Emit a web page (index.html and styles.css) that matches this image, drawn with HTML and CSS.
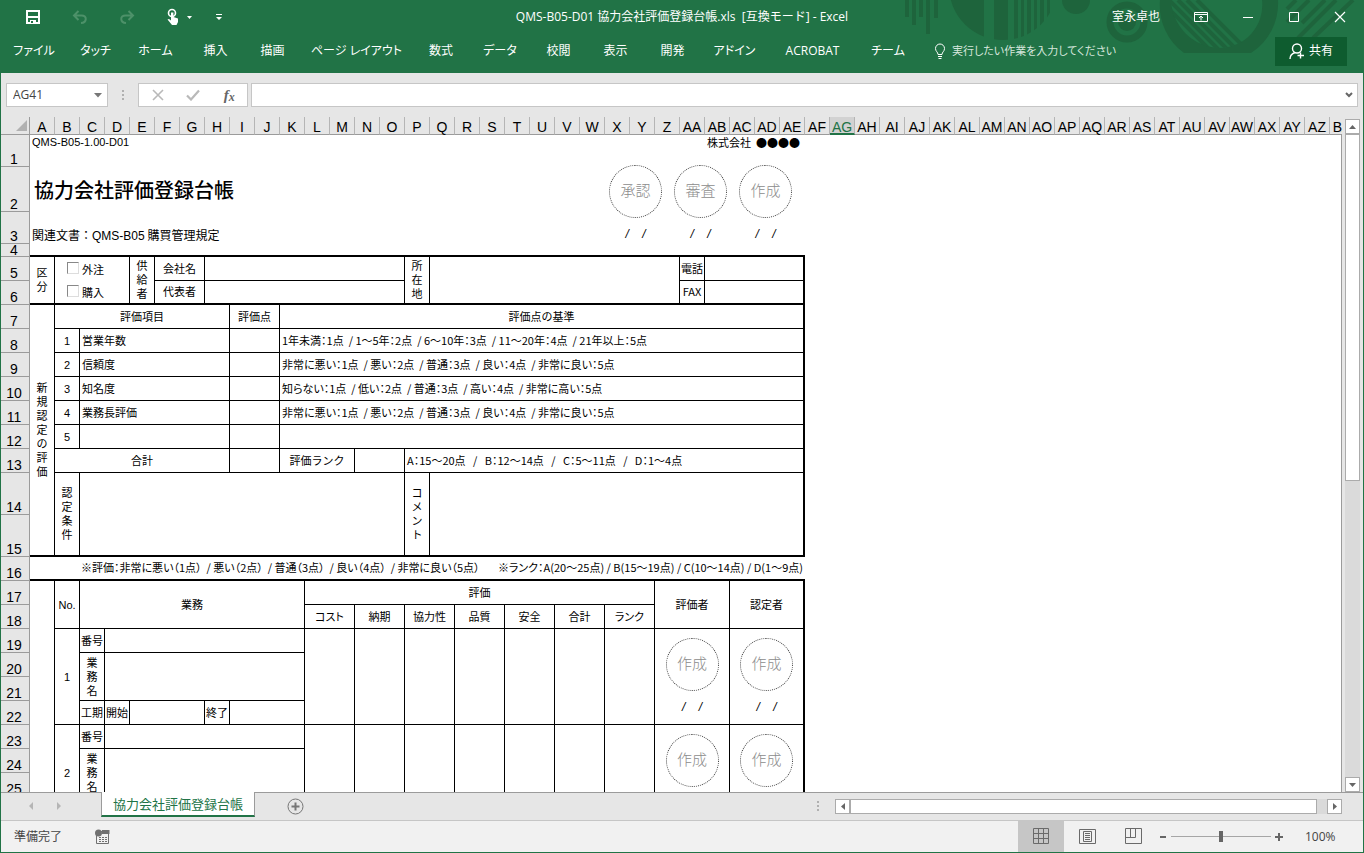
FILE: index.html
```html
<!DOCTYPE html>
<html lang="ja">
<head>
<meta charset="utf-8">
<title>QMS-B05-D01 協力会社評価登録台帳.xls [互換モード] - Excel</title>
<link rel="stylesheet" href="styles.css">
</head>
<body>
<div class="window">
  <header class="top">
    <svg class="deco" width="464" height="54" viewBox="900 0 464 54" aria-hidden="true">
      <defs>
        <clipPath id="disc"><circle cx="1003" cy="-14" r="54"/></clipPath>
        <clipPath id="inner"><circle cx="1219" cy="0" r="48"/></clipPath>
      </defs>
      <g fill="#1e643c">
        <path d="M905 0h4v17h-4zM912 0h4v25h-4zM919 0h4v17h-4zM926 0h4v34h-4zM934 0h4v18h-4z"/>
        <g clip-path="url(#disc)"><path d="M950 0h34v50h-34zM994 0h14v50h-14zM1014 0h4v50h-4zM1021 0h3v50h-3zM1027 0h4v50h-4zM1034 0h3v50h-3zM1040 0h4v50h-4zM1047 0h3v50h-3z"/></g>
        <circle cx="1076" cy="0" r="14"/>
        <circle cx="1127" cy="22" r="9"/>
        <path fill-rule="evenodd" d="M1160 0A59 59 0 0 0 1184 53H1251A59 59 0 0 0 1278 0H1262A43 43 0 0 1 1219 48A50 50 0 0 1 1171 0Z"/>
      </g>
      <circle cx="1127" cy="22" r="17" fill="none" stroke="#1e643c" stroke-width="7"/>
      <g clip-path="url(#inner)" stroke="#1e643c" stroke-width="4">
        <path d="M1160 0l50 50M1169 0l50 50M1178 0l50 50M1187 0l50 50M1197 0l50 50"/>
      </g>
      <path d="M1287 9l9-9M1287 22l22-22M1302 23l23-23M1298 38l38-38M1313 38l40-38" stroke="#1e643c" stroke-width="4"/>
    </svg>
    <div class="titlebar">
      <div class="quick">
        <button aria-label="上書き保存"><svg width="16" height="16" viewBox="0 0 16 16"><path d="M1 1h14v14H1z" fill="#fff"/><path d="M3 3h10v4H3zM3 9h10v4H3z" fill="#217346"/><path d="M5 11h6v3H5z" fill="#fff"/><path d="M6 12h2v2H6z" fill="#217346"/></svg></button>
        <button aria-label="元に戻す"><svg width="16" height="16" viewBox="0 0 16 16" fill="none" stroke="#4d9169" stroke-width="2"><path d="M6.500 2L2 6.500 6.500 11M2 6.500h7.500c6 0 5.500 7-.5 7.500"/></svg></button>
        <button aria-label="やり直し"><svg width="16" height="16" viewBox="0 0 16 16" fill="none" stroke="#4d9169" stroke-width="2"><path d="M9.500 2L14 6.500 9.500 11M14 6.500H6.500c-6 0-5.500 7 .5 7.500"/></svg></button>
        <button class="touch" aria-label="タッチ/マウス モード"><svg width="28" height="18" viewBox="0 0 28 18"><circle cx="6" cy="5" r="3.500" fill="none" stroke="#fff" stroke-width="1.600"/><path d="M5 4.500h2.400V9l4.600 1.500V14l-1.500 3H6L1.500 11.500 3 11l2 1.500z" fill="#fff"/><path d="M21 8h5l-2.500 3z" fill="#fff"/></svg></button>
        <button aria-label="クイック アクセスのカスタマイズ"><svg width="8" height="8" viewBox="0 0 8 8" fill="#fff"><path d="M1 1h6v1H1zM1 4h6L4 7z"/></svg></button>
      </div>
      <h1 class="doc">QMS-B05-D01 協力会社評価登録台帳.xls&nbsp; [互換モード] - Excel</h1>
      <div class="account">
        <span class="user">室永卓也</span>
        <button aria-label="リボンの表示オプション"><svg width="14" height="12" viewBox="0 0 14 12" fill="none" stroke="#fff"><path d="M.5 1.500h13v9H.5zM.5 3.500h13M7 9.500v-4M5 7l2-2 2 2"/></svg></button>
        <button aria-label="最小化"><svg width="12" height="12" viewBox="0 0 12 12"><path d="M1 6.500h10" stroke="#fff"/></svg></button>
        <button aria-label="最大化"><svg width="12" height="12" viewBox="0 0 12 12"><path d="M1.500 1.500h9v9h-9z" stroke="#fff" fill="none"/></svg></button>
        <button aria-label="閉じる"><svg width="12" height="12" viewBox="0 0 12 12"><path d="M1 1l10 10M11 1L1 11" stroke="#fff" stroke-width="1.200"/></svg></button>
      </div>
    </div>
    <div class="ribbon">
      <nav class="tabs">
        <button>ファイル</button><button>タッチ</button><button>ホーム</button><button>挿入</button><button>描画</button><button>ページ レイアウト</button><button>数式</button><button>データ</button><button>校閲</button><button>表示</button><button>開発</button><button>アドイン</button><button>ACROBAT</button><button>チーム</button>
      </nav>
      <button class="tell"><svg width="12" height="16" viewBox="0 0 12 16" fill="none" stroke="#fff"><path d="M4 11.500C4 9 1.500 8.500 1.500 5.500a4.500 4.500 0 0 1 9 0C10.500 8.500 8 9 8 11.500zM4 13.500h4M4.500 15.500h3"/></svg>実行したい作業を入力してください</button>
      <button class="share"><svg width="16" height="17" viewBox="0 0 16 17" fill="none" stroke="#fff" stroke-width="1.400"><circle cx="8" cy="5.500" r="4.500"/><path d="M1 16c0-3.500 2-5.500 5-6.500M8.500 12.500H15M11.500 9.500v6"/></svg>共有</button>
    </div>
  </header>

  <div class="formula">
    <div class="namebox"><input aria-label="名前ボックス" value="AG41"><button aria-label="名前の一覧"><svg width="8" height="5" viewBox="0 0 8 5"><path d="M0 0h8L4 4.500z" fill="#777"/></svg></button></div>
    <svg class="grip" width="3" height="11" viewBox="0 0 3 11" fill="#b0b0b0"><path d="M0 0h2v2H0zM0 4h2v2H0zM0 8h2v2H0z"/></svg>
    <div class="fx">
      <button aria-label="キャンセル"><svg width="12" height="12" viewBox="0 0 12 12"><path d="M1 1l10 10M11 1L1 11" stroke="#b9b9b9" stroke-width="1.600"/></svg></button>
      <button aria-label="入力"><svg width="14" height="12" viewBox="0 0 14 12"><path d="M1 6.500L5 10.500 13 1.500" stroke="#b9b9b9" stroke-width="2.200" fill="none"/></svg></button>
      <button aria-label="関数の挿入"><i>f</i><i class="sub">x</i></button>
    </div>
    <div class="entry"><input aria-label="数式バー"><button aria-label="数式バーの展開"><svg width="8" height="6" viewBox="0 0 8 6"><path d="M1 1l3 3 3-3" stroke="#666" stroke-width="2" fill="none"/></svg></button></div>
  </div>

  <main class="work">
    <div class="sheet">
      <table class="grid">
        <colgroup><col class="rowcol"><col span="53" class="unit"></colgroup>
        <thead>
          <tr><th class="corner"><svg width="11" height="11" viewBox="0 0 11 11"><path d="M11 0v11H0z" fill="#b1b1b1"/></svg></th><th>A</th><th>B</th><th>C</th><th>D</th><th>E</th><th>F</th><th>G</th><th>H</th><th>I</th><th>J</th><th>K</th><th>L</th><th>M</th><th>N</th><th>O</th><th>P</th><th>Q</th><th>R</th><th>S</th><th>T</th><th>U</th><th>V</th><th>W</th><th>X</th><th>Y</th><th>Z</th><th>AA</th><th>AB</th><th>AC</th><th>AD</th><th>AE</th><th>AF</th><th class="active">AG</th><th>AH</th><th>AI</th><th>AJ</th><th>AK</th><th>AL</th><th>AM</th><th>AN</th><th>AO</th><th>AP</th><th>AQ</th><th>AR</th><th>AS</th><th>AT</th><th>AU</th><th>AV</th><th>AW</th><th>AX</th><th>AY</th><th>AZ</th><th>BA</th></tr>
        </thead>
        <tbody>
          <tr class="h32"><th>1</th><td class="n top l latin" colspan="22">QMS-B05-1.00-D01</td><td class="n top r" colspan="9">株式会社&nbsp;&nbsp;●●●●</td><td class="n" colspan="22"></td></tr>
          <tr class="h45"><th>2</th><td class="n l heading" colspan="22">協力会社評価登録台帳</td><td class="n approvals" colspan="9"><div class="seals"><span class="seal">承認</span><span class="seal">審査</span><span class="seal">作成</span></div></td><td class="n" colspan="22"></td></tr>
          <tr class="h32"><th>3</th><td class="n l related" colspan="22">関連文書：<span>QMS-B05</span> 購買管理規定</td><td class="n" colspan="9"><div class="dates"><span>/&nbsp;&nbsp;&nbsp;&nbsp;/</span><span>/&nbsp;&nbsp;&nbsp;&nbsp;/</span><span>/&nbsp;&nbsp;&nbsp;&nbsp;/</span></div></td><td class="n" colspan="22"></td></tr>
          <tr class="h13"><th>4</th><td class="n b2" colspan="31"></td><td class="n" colspan="22"></td></tr>

          <tr><th>5</th><td class="b2" rowspan="2"><span class="v">区分</span></td><td class="b2 kinds" colspan="3" rowspan="2"><label><input type="checkbox">外注</label><label><input type="checkbox">購入</label></td><td class="b2" rowspan="2"><span class="v">供給者</span></td><td colspan="2">会社名</td><td colspan="8"></td><td class="b2" rowspan="2"><span class="v">所在地</span></td><td class="b2" colspan="10" rowspan="2"></td><td>電話</td><td class="r2" colspan="4"></td><td class="n" colspan="22"></td></tr>
          <tr><th>6</th><td class="b2" colspan="2">代表者</td><td class="b2" colspan="8"></td><td class="b2">FAX</td><td class="b2 r2" colspan="4"></td><td class="n" colspan="22"></td></tr>

          <tr><th>7</th><td class="b2" rowspan="9"><span class="v">新規認定の評価</span></td><td colspan="7">評価項目</td><td colspan="2">評価点</td><td class="r2" colspan="21">評価点の基準</td><td class="n" colspan="22"></td></tr>
          <tr><th>8</th><td class="latin">1</td><td class="l" colspan="6">営業年数</td><td colspan="2"></td><td class="l r2 criteria" colspan="21">1年未満：1点&nbsp; / 1～5年：2点&nbsp; / 6～10年：3点&nbsp; / 11～20年：4点&nbsp; / 21年以上：5点</td><td class="n" colspan="22"></td></tr>
          <tr><th>9</th><td class="latin">2</td><td class="l" colspan="6">信頼度</td><td colspan="2"></td><td class="l r2 criteria" colspan="21">非常に悪い：1点&nbsp; / 悪い：2点&nbsp; / 普通：3点&nbsp; / 良い：4点&nbsp; / 非常に良い：5点</td><td class="n" colspan="22"></td></tr>
          <tr><th>10</th><td class="latin">3</td><td class="l" colspan="6">知名度</td><td colspan="2"></td><td class="l r2 criteria" colspan="21">知らない：1点&nbsp; / 低い：2点&nbsp; / 普通：3点&nbsp; / 高い：4点&nbsp; / 非常に高い：5点</td><td class="n" colspan="22"></td></tr>
          <tr><th>11</th><td class="latin">4</td><td class="l" colspan="6">業務長評価</td><td colspan="2"></td><td class="l r2 criteria" colspan="21">非常に悪い：1点&nbsp; / 悪い：2点&nbsp; / 普通：3点&nbsp; / 良い：4点&nbsp; / 非常に良い：5点</td><td class="n" colspan="22"></td></tr>
          <tr><th>12</th><td class="latin">5</td><td colspan="6"></td><td colspan="2"></td><td class="r2" colspan="21"></td><td class="n" colspan="22"></td></tr>
          <tr><th>13</th><td colspan="7">合計</td><td colspan="2"></td><td colspan="3">評価ランク</td><td colspan="2"></td><td class="l r2 criteria" colspan="16">A：15～20点&nbsp;&nbsp; /&nbsp;&nbsp; B：12～14点&nbsp;&nbsp; /&nbsp;&nbsp; C：5～11点&nbsp;&nbsp; /&nbsp;&nbsp; D：1～4点</td><td class="n" colspan="22"></td></tr>
          <tr class="h42"><th>14</th><td class="b2" rowspan="2"><span class="v">認定条件</span></td><td class="b2" colspan="13" rowspan="2"></td><td class="b2" rowspan="2"><span class="v">コメント</span></td><td class="b2 r2" colspan="15" rowspan="2"></td><td class="n" colspan="22"></td></tr>
          <tr class="h42"><th>15</th><td class="n" colspan="22"></td></tr>
          <tr><th>16</th><td class="n b2" colspan="2"></td><td class="n b2 notes" colspan="29"><div><span class="criteria">※評価：非常に悪い（1点）&nbsp; / 悪い（2点）&nbsp; / 普通（3点）&nbsp; / 良い（4点）&nbsp; / 非常に良い（5点）</span><span class="criteria">※ランク：A(20～25点) / B(15～19点) / C(10～14点) / D(1～9点)</span></div></td><td class="n" colspan="22"></td></tr>

          <tr><th>17</th><td rowspan="10"></td><td class="latin" rowspan="2">No.</td><td colspan="9" rowspan="2">業務</td><td colspan="14">評価</td><td colspan="3" rowspan="2">評価者</td><td class="r2" colspan="3" rowspan="2">認定者</td><td class="n" colspan="22"></td></tr>
          <tr><th>18</th><td class="criteria" colspan="2">コスト</td><td colspan="2">納期</td><td colspan="2">協力性</td><td colspan="2">品質</td><td colspan="2">安全</td><td colspan="2">合計</td><td class="criteria" colspan="2">ランク</td><td class="n" colspan="22"></td></tr>

          <tr><th>19</th><td class="latin" rowspan="4">1</td><td>番号</td><td colspan="8"></td><td colspan="2" rowspan="4"></td><td colspan="2" rowspan="4"></td><td colspan="2" rowspan="4"></td><td colspan="2" rowspan="4"></td><td colspan="2" rowspan="4"></td><td colspan="2" rowspan="4"></td><td colspan="2" rowspan="4"></td><td class="sign" colspan="3" rowspan="4"><span class="seal">作成</span><span class="date">/&nbsp;&nbsp;&nbsp;&nbsp;/</span></td><td class="sign r2" colspan="3" rowspan="4"><span class="seal">作成</span><span class="date">/&nbsp;&nbsp;&nbsp;&nbsp;/</span></td><td class="n" colspan="22"></td></tr>
          <tr><th>20</th><td rowspan="2"><span class="v">業務名</span></td><td colspan="8" rowspan="2"></td><td class="n" colspan="22"></td></tr>
          <tr><th>21</th><td class="n" colspan="22"></td></tr>
          <tr><th>22</th><td>工期</td><td>開始</td><td colspan="3"></td><td>終了</td><td colspan="3"></td><td class="n" colspan="22"></td></tr>

          <tr><th>23</th><td class="latin" rowspan="4">2</td><td>番号</td><td colspan="8"></td><td colspan="2" rowspan="4"></td><td colspan="2" rowspan="4"></td><td colspan="2" rowspan="4"></td><td colspan="2" rowspan="4"></td><td colspan="2" rowspan="4"></td><td colspan="2" rowspan="4"></td><td colspan="2" rowspan="4"></td><td class="sign" colspan="3" rowspan="4"><span class="seal">作成</span></td><td class="sign r2" colspan="3" rowspan="4"><span class="seal">作成</span></td><td class="n" colspan="22"></td></tr>
          <tr><th>24</th><td rowspan="2"><span class="v">業務名</span></td><td colspan="8" rowspan="2"></td><td class="n" colspan="22"></td></tr>
          <tr><th>25</th><td class="n" colspan="22"></td></tr>
          <tr><th></th><td colspan="9"></td><td class="n" colspan="22"></td></tr>
        </tbody>
      </table>
    </div>
    <div class="vscroll">
      <button aria-label="上へスクロール"><svg width="7" height="4" viewBox="0 0 7 4"><path d="M0 4h7L3.500 0z" fill="#666"/></svg></button>
      <div class="track"><div class="thumb"></div></div>
      <button aria-label="下へスクロール"><svg width="7" height="4" viewBox="0 0 7 4"><path d="M0 0h7L3.500 4z" fill="#666"/></svg></button>
    </div>
  </main>

  <div class="sheetbar">
    <div class="arrows">
      <button aria-label="前のシート"><svg width="4" height="8" viewBox="0 0 4 8"><path d="M4 0v8L0 4z" fill="#b5b5b5"/></svg></button>
      <button aria-label="次のシート"><svg width="4" height="8" viewBox="0 0 4 8"><path d="M0 0v8l4-4z" fill="#b5b5b5"/></svg></button>
    </div>
    <button class="sheettab">協力会社評価登録台帳</button>
    <button class="add" aria-label="新しいシート"><svg width="17" height="17" viewBox="0 0 17 17" fill="none" stroke="#767676"><circle cx="8.500" cy="8.500" r="7.500"/><path d="M4.500 8.500h8M8.500 4.500v8" stroke-width="2"/></svg></button>
    <svg class="grip" width="3" height="11" viewBox="0 0 3 11" fill="#b0b0b0"><path d="M0 0h2v2H0zM0 4h2v2H0zM0 8h2v2H0z"/></svg>
    <div class="hscroll">
      <button aria-label="左へスクロール"><svg width="4" height="7" viewBox="0 0 4 7"><path d="M4 0v7L0 3.500z" fill="#666"/></svg></button>
      <div class="track"><div class="thumb"></div></div>
      <button aria-label="右へスクロール"><svg width="4" height="7" viewBox="0 0 4 7"><path d="M0 0v7l4-3.500z" fill="#666"/></svg></button>
    </div>
  </div>

  <footer class="status">
    <span>準備完了</span>
    <button class="macro" aria-label="マクロの記録"><svg width="15" height="16" viewBox="0 0 15 16"><path d="M1.500 5.500v9h12v-12H6" fill="none" stroke="#707070"/><path d="M7 1h7.500v4H7z" fill="#707070"/><circle cx="3.500" cy="4" r="3.500" fill="#707070"/><path d="M4 8h2v1H4zM7 8h2v1H7zM10 8h2v1h-2zM4 10h2v1H4zM7 10h2v1H7zM10 10h2v1h-2zM4 12h2v1H4zM7 12h2v1H7zM10 12h2v1h-2z" fill="#707070"/></svg></button>
    <div class="views">
      <button class="on" aria-label="標準"><svg width="17" height="17" viewBox="0 0 17 17" fill="none" stroke="#6a6a6a"><path d="M.5.5h15v15H.5zM.5 5.500h15M.5 10.500h15M5.500.5v15M10.500.5v15"/></svg></button>
      <button aria-label="ページ レイアウト"><svg width="17" height="17" viewBox="0 0 17 17" fill="none" stroke="#6a6a6a"><path d="M.5 1.500h16v14H.5zM4.500 3.500h8v10h-8zM6 5.500h5M6 7.500h5M6 9.500h5M6 11.500h5"/></svg></button>
      <button aria-label="改ページ プレビュー"><svg width="17" height="17" viewBox="0 0 17 17" fill="none" stroke="#6a6a6a"><path d="M.5.5h16v15H.5zM5.500.5v9M10.500.5v9M.5 9.500h10"/></svg></button>
    </div>
    <button class="zoombtn" aria-label="縮小"><svg width="8" height="8" viewBox="0 0 8 8"><path d="M1 3h6v2H1z" fill="#666"/></svg></button>
    <input class="zoom" type="range" min="0" max="100" value="50" aria-label="ズーム">
    <button class="zoombtn" aria-label="拡大"><svg width="8" height="8" viewBox="0 0 8 8"><path d="M0 3h3V0h2v3h3v2H5v3H3V5H0z" fill="#666"/></svg></button>
    <span class="percent">100%</span>
  </footer>
</div>
</body>
</html>
```

FILE: styles.css
```css
* { box-sizing: border-box; }
body {
  margin: 0;
  font: 12px/16px "Open Sans", "Noto Sans CJK JP", sans-serif;
  color: #444;
}
button, input { font: inherit; color: inherit; }
button {
  display: flex;
  align-items: center;
  justify-content: center;
  margin: 0;
  padding: 0;
  border: 0;
  background: none;
  white-space: nowrap;
}
svg { display: block; flex: none; }

.window {
  display: flex;
  flex-direction: column;
  height: 100vh;
  border: 1px solid #217346;
  border-top: 0;
  background: #e6e6e6;
  overflow: hidden;
}

/* Title bar and ribbon */
.top {
  position: relative;
  flex: none;
  height: 73px;
  background: #217346;
  color: #fff;
}
.deco { position: absolute; top: 0; right: -1px; }
.titlebar {
  position: relative;
  display: grid;
  grid-template-columns: 1fr auto 1fr;
  align-items: center;
  height: 34px;
}
.quick { display: flex; align-items: center; padding-left: 24px; gap: 31px; }
.quick .touch { margin-right: -10px; }
.doc { margin: 0; font-size: 12px; font-weight: 400; }
.account { display: flex; align-items: center; justify-content: flex-end; gap: 34px; padding-right: 17px; }
.ribbon { position: relative; display: flex; align-items: center; height: 34px; font-feature-settings: "palt"; }
.tabs {
  display: grid;
  grid-template-columns: 66px 57px 63px 57px 57px 111px 58px 60px 57px 57px 57px 67px 89px 62px;
}
.tell { gap: 6px; margin-left: 15px; color: #d5e6dc; font-size: 11px; }
.share {
  gap: 4px;
  width: 72px;
  height: 29px;
  margin-left: auto;
  margin-right: 16px;
  background: #0e5c2f;
}

/* Formula bar */
.formula { display: flex; align-items: center; flex: none; height: 44px; padding: 0 5px; }
.namebox, .fx, .entry { display: flex; height: 24px; border: 1px solid #c6c6c6; background: #fff; }
.namebox { width: 102px; padding-right: 5px; }
.namebox input, .entry input {
  flex: 1;
  min-width: 0;
  padding: 0 6px;
  border: 0;
  outline: 0;
  background: none;
}
.formula .grip { margin: 0 13px 0 14px; }
.fx { width: 110px; justify-content: space-around; padding: 0 0 0 1px; margin-right: 3px; }
.fx button { width: 30px; }
.fx i { font: italic bold 15px/20px "Liberation Serif", serif; color: #666; }
.fx .sub { font-size: 12px; padding-top: 4px; }
.entry { flex: 1; padding-right: 4px; }

/* Worksheet */
.work { display: flex; flex: 1; min-height: 0; }
.sheet { position: relative; flex: 1; min-width: 0; overflow: hidden; }
.sheet::after {
  content: "";
  position: absolute;
  top: 17px;
  right: 0;
  bottom: 0;
  border-right: 1px solid #9b9b9b;
}
.grid {
  table-layout: fixed;
  width: 1354px;
  border-collapse: separate;
  border-spacing: 0;
  background: #fff;
  color: #000;
  font: 11px/14px "Noto Sans CJK JP", sans-serif;
}
.rowcol { width: 29px; }
.unit { width: 25px; }
.grid th {
  padding: 0 2px 1px 0;
  border: solid #9b9b9b;
  border-width: 0 1px 1px 0;
  background: #e6e6e6;
  font: 14px/12px "Liberation Sans", sans-serif;
  vertical-align: bottom;
}
.grid .h13 th { padding-bottom: 0; }
.grid thead th {
  height: 18px;
  padding: 3px 0 0;
  border-right-color: #b5b5b5;
  line-height: 13px;
}
.grid thead .corner { padding: 0 0 3px 15px; border-right-color: #9b9b9b; }
.grid thead .active {
  border-bottom: 2px solid #217346;
  background: #d2d2d2;
  color: #217346;
  line-height: 12px;
}
.grid tbody tr { height: 24px; }
.grid tbody .h13 { height: 13px; }
.grid tbody .h32 { height: 32px; }
.grid tbody .h42 { height: 42px; }
.grid tbody .h45 { height: 45px; }
.grid td {
  padding: 0 0 2px;
  border: solid #000;
  border-width: 0 1px 1px 0;
  text-align: center;
  white-space: nowrap;
}
.grid .n { border-width: 0; }
.grid .b2 { border-bottom-width: 2px; }
.grid .r2 { border-right-width: 2px; }
.grid .l { text-align: left; padding-left: 2px; }
.grid .r { text-align: right; padding-right: 5px; }
.grid .top { position: static; height: auto; background: none; color: #000; vertical-align: top; }
.grid .latin { padding-bottom: 0; font-family: "Liberation Sans", "Noto Sans CJK JP", sans-serif; }
.grid .heading { padding-left: 4px; padding-bottom: 0; font-size: 20px; line-height: 24px; font-weight: 500; }
.grid .related { padding: 14px 0 0 2px; font-size: 12px; line-height: 16px; }
.related span { font-family: "Liberation Sans", sans-serif; }
.criteria { font-feature-settings: "palt"; }
.v {
  display: block;
  width: 11px;
  margin: 0 auto;
  white-space: normal;
  word-break: break-all;
}
.seal {
  display: flex;
  align-items: center;
  justify-content: center;
  width: 53px;
  height: 53px;
  padding-bottom: 3px;
  border: 1px dotted #444;
  border-radius: 50%;
  color: #8c8c8c;
  font-size: 15px;
  line-height: 20px;
  font-weight: 300;
}
.grid .approvals { position: relative; }
.seals { position: absolute; top: -2px; right: 13px; display: flex; gap: 12px; }
.dates { display: flex; justify-content: flex-end; padding: 14px 7px 0 0; }
.dates span { width: 65px; }
.dates, .date { font: italic 12px/14px "Liberation Sans", sans-serif; }
.grid .sign { padding-top: 9px; vertical-align: top; }
.sign .seal { margin: 0 auto; }
.date { display: block; margin-top: 9px; }
.grid .kinds { padding: 0; }
.kinds label { display: flex; align-items: center; height: 24px; padding-left: 12px; gap: 3px; }
.kinds label:last-child { height: 22px; }
.kinds input {
  appearance: none;
  width: 12px;
  height: 12px;
  margin: 0 0 2px;
  border: 1px solid;
  border-color: #888 #ddd #ddd #888;
  background: #fff;
}
.notes div { display: flex; justify-content: space-between; padding: 0 2px 0 1px; }

.vscroll { display: flex; flex-direction: column; flex: none; width: 15px; margin: 2px 3px 0; }
.vscroll button, .hscroll button { width: 15px; height: 15px; flex: none; border: 1px solid #ababab; background: #fff; }
.track { flex: 1; min-width: 0; background: #dadada; }
.thumb { border: 1px solid #ababab; background: #fff; }
.vscroll .thumb { height: 54%; }

/* Sheet tabs */
.sheetbar { display: flex; align-items: flex-start; flex: none; height: 28px; border-top: 1px solid #9b9b9b; }
.arrows { display: flex; width: 100px; height: 26px; padding-left: 28px; gap: 24px; }
.sheettab {
  width: 154px;
  height: 25px;
  margin-top: -1px;
  border: solid #9b9b9b;
  border-width: 0 1px;
  border-bottom: 2px solid #217346;
  background: #fff;
  color: #217346;
  font-size: 13px;
}
.add { margin: 5px 0 0 32px; }
.sheetbar .grip { margin: 8px 15px 0 auto; }
.hscroll { display: flex; width: 507px; margin: 6px 21px 0 0; }
.hscroll .thumb { width: 98%; height: 15px; }

/* Status bar */
.status {
  display: flex;
  align-items: center;
  flex: none;
  height: 32px;
  padding-left: 13px;
  border-top: 1px solid #c6c6c6;
  background: #f1f1f1;
}
.macro { margin-left: 33px; }
.views { display: flex; align-self: stretch; margin-left: auto; }
.views button { width: 46px; }
.views .on { background: #c6c6c6; }
.zoombtn { width: 12px; height: 16px; }
.views + .zoombtn { margin-left: 1px; }
.zoom { appearance: none; width: 104px; height: 12px; margin: 0; background: linear-gradient(#a6a6a6, #a6a6a6) center / 100px 1px no-repeat; }
.zoom::-webkit-slider-thumb { appearance: none; width: 4px; height: 11px; background: #666; }
.percent { width: 32px; margin: 0 26px 0 20px; }
```
